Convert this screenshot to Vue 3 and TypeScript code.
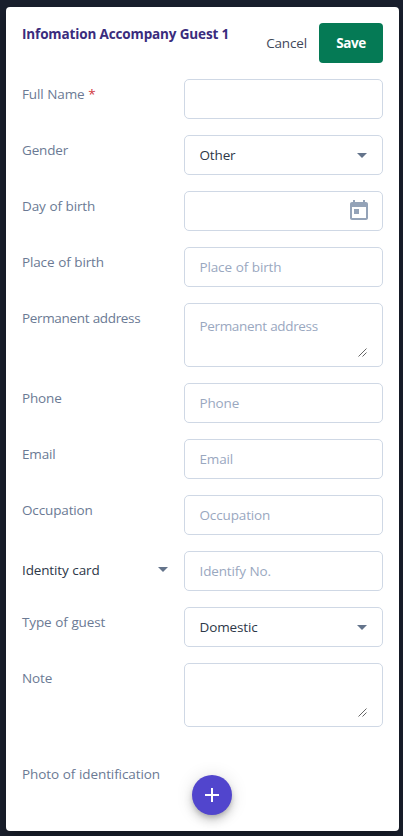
<script setup lang="ts">
interface Field {
  label: string
  kind: 'text' | 'select' | 'date' | 'area'
  required?: boolean
  pick?: boolean
  tight?: boolean
  value?: string
  placeholder?: string
}

const fields: Field[] = [
  { label: 'Full Name', kind: 'text', required: true },
  { label: 'Gender', kind: 'select', value: 'Other' },
  { label: 'Day of birth', kind: 'date' },
  { label: 'Place of birth', kind: 'text', placeholder: 'Place of birth' },
  { label: 'Permanent address', kind: 'area', tight: true, placeholder: 'Permanent address' },
  { label: 'Phone', kind: 'text', placeholder: 'Phone' },
  { label: 'Email', kind: 'text', placeholder: 'Email' },
  { label: 'Occupation', kind: 'text', placeholder: 'Occupation' },
  { label: 'Identity card', kind: 'text', pick: true, placeholder: 'Identify No.' },
  { label: 'Type of guest', kind: 'select', value: 'Domestic' },
  { label: 'Note', kind: 'area' },
]
</script>

<template>
  <main class="backdrop">
    <section class="card">
      <header class="head">
        <h1 class="title">Infomation Accompany Guest 1</h1>
        <button class="cancel" type="button">Cancel</button>
        <button class="save" type="button">Save</button>
      </header>

      <div class="rows">
        <div v-for="f in fields" :key="f.label" class="row" :class="{ tight: f.tight }">
          <div v-if="f.pick" class="picker">
            <span>{{ f.label }}</span>
            <svg class="caret" viewBox="0 0 10 5"><path d="M0 0h10L5 5z" /></svg>
          </div>
          <label v-else class="label">{{ f.label }}<span v-if="f.required" class="star"> *</span></label>

          <div class="box" :class="f.kind">
            <span v-if="f.value" class="value">{{ f.value }}</span>
            <span v-else class="hint">{{ f.placeholder }}</span>
            <svg v-if="f.kind === 'select'" class="caret" viewBox="0 0 10 5"><path d="M0 0h10L5 5z" /></svg>
            <svg v-if="f.kind === 'date'" class="calendar" viewBox="0 0 24 24">
              <path d="M19 3h-1V1h-2v2H8V1H6v2H5c-1.11 0-1.99.9-1.99 2L3 19c0 1.1.89 2 2 2h14c1.1 0 2-.9 2-2V5c0-1.1-.9-2-2-2zm0 16H5V8h14v11zM7 10h5v5H7z" />
            </svg>
            <svg v-if="f.kind === 'area'" class="grip" viewBox="0 0 9 9">
              <path d="M.5 8.500l8-8M4.500 8.500l4-4" />
            </svg>
          </div>
        </div>
      </div>

      <div class="row photo">
        <label class="label">Photo of identification</label>
        <button class="add" type="button" aria-label="Add photo">
          <svg viewBox="0 0 24 24"><path d="M19 13h-6v6h-2v-6H5v-2h6V5h2v6h6v2z" /></svg>
        </button>
      </div>
    </section>
  </main>
</template>

<style>
body {
  background: #1a202e;
}
</style>

<style scoped>
.backdrop {
  box-sizing: border-box;
  height: 836px;
  padding: 7px 4px 5px 6px;
  background: #1a202e;
  font-family: "Open Sans", "Noto Sans", sans-serif;
  font-size: 13.5px;
  line-height: 20px;
  overflow: hidden;
}
.card {
  box-sizing: border-box;
  height: 824px;
  padding: 16px 16px 0;
  background: #fff;
  border-radius: 4px;
  box-shadow: 0 6px 16px rgba(0, 0, 0, 0.35);
}
.head {
  display: flex;
  height: 40px;
  align-items: center;
}
.title {
  flex: 1;
  align-self: flex-start;
  margin: 1px 0 0;
  color: #3a2c7d;
  font-size: 13.5px;
  font-weight: 700;
  line-height: 20px;
  letter-spacing: -0.14px;
  white-space: nowrap;
}
button {
  border: 0;
  padding: 0;
  font: inherit;
}
.cancel {
  margin-right: 12px;
  background: none;
  color: #3f4859;
  letter-spacing: -0.15px;
}
.save {
  width: 64px;
  height: 40px;
  border-radius: 4px;
  background: #057a55;
  color: #fff;
  font-weight: 700;
  letter-spacing: -0.4px;
}
.rows {
  display: flex;
  flex-direction: column;
  gap: 16px;
  margin-top: 16px;
}
.row {
  display: grid;
  grid-template-columns: 146px 199px;
  column-gap: 16px;
  align-items: start;
  letter-spacing: -0.14px;
  word-spacing: 0.4px;
}
.tight {
  letter-spacing: -0.34px;
}
.label {
  padding-top: 5px;
  color: #6b7a94;
  white-space: nowrap;
}
.star {
  color: #d0393e;
}
.picker {
  display: flex;
  align-items: center;
  justify-content: space-between;
  height: 38px;
  color: #2d3748;
}
.picker .caret {
  margin-bottom: 1px;
}
.box {
  box-sizing: border-box;
  display: flex;
  align-items: center;
  height: 40px;
  padding: 0 15px 0 14.5px;
  border: 1px solid #cfd8e5;
  border-radius: 5px;
}
.value,
.hint {
  flex: 1;
}
.value {
  color: #2d3748;
}
.hint {
  color: #9aa8bf;
}
.caret {
  width: 10px;
  height: 5px;
  fill: #64748b;
}
.calendar {
  width: 24px;
  height: 24px;
  margin-right: -4px;
  fill: #94a3b8;
}
.area {
  height: 64px;
  align-items: flex-start;
  padding-top: 12px;
}
.grip {
  align-self: flex-end;
  width: 9px;
  height: 9px;
  margin-bottom: 9px;
  stroke: #555;
  stroke-width: 0.9;
  fill: none;
}
.photo {
  margin-top: 32px;
  letter-spacing: -0.1px;
}
.add {
  display: flex;
  align-items: center;
  justify-content: center;
  width: 40px;
  height: 40px;
  margin: 16px 0 0 8px;
  border-radius: 50%;
  background: #5145cd;
  box-shadow: 0 3px 5px -1px rgba(0, 0, 0, 0.2), 0 6px 10px rgba(0, 0, 0, 0.14), 0 1px 18px rgba(0, 0, 0, 0.12);
}
.add svg {
  width: 24px;
  height: 24px;
  fill: #fff;
}
</style>
